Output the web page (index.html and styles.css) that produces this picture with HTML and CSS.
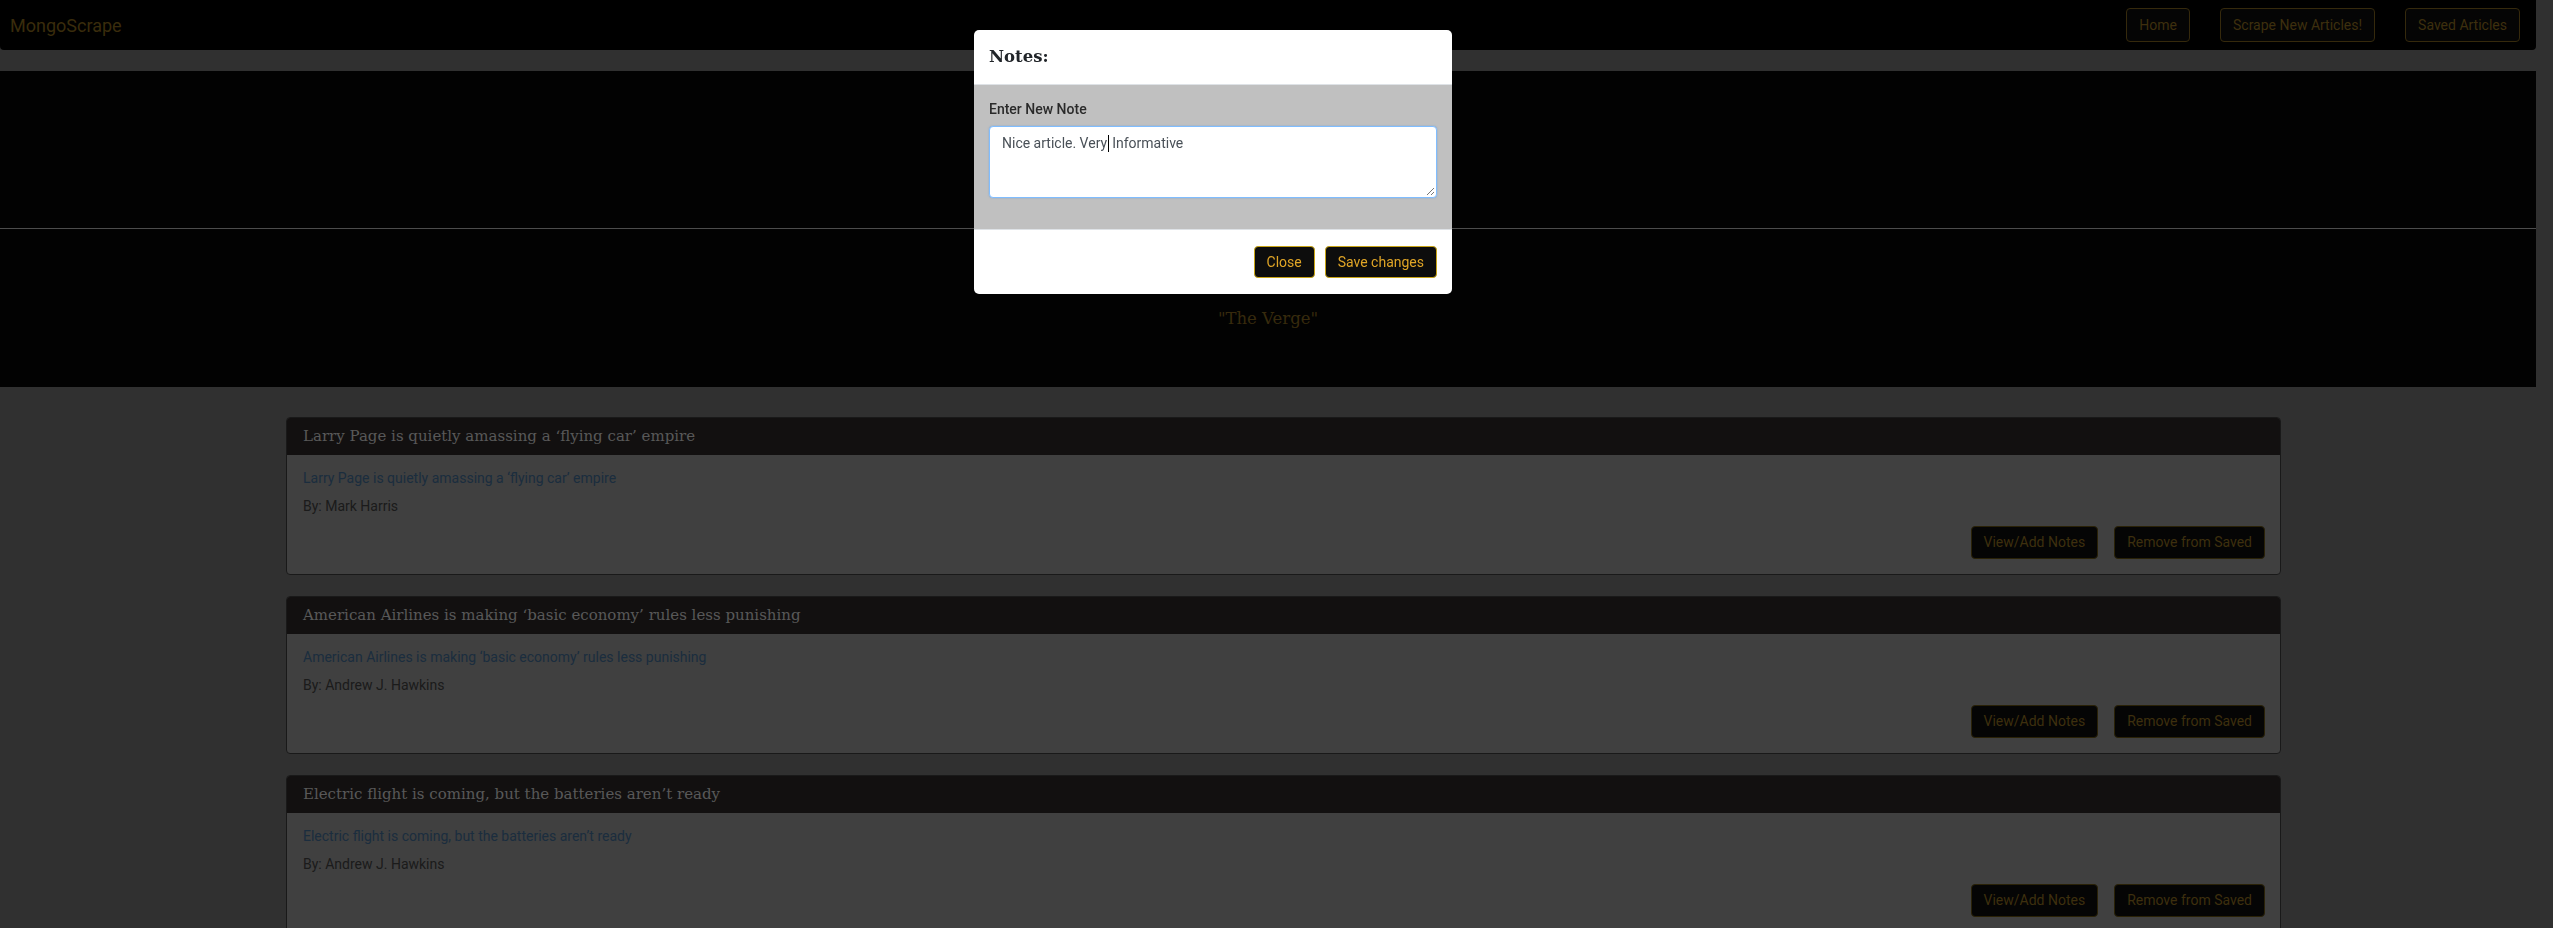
FILE: index.html
```html
<!DOCTYPE html>
<html lang="en">
<head>
<meta charset="utf-8">
<title>MongoScrape - Saved Articles</title>
<link rel="stylesheet" href="styles.css">
</head>
<body class="modal-open">
  <nav class="navbar">
    <a class="brand" href="#">MongoScrape</a>
    <div class="nav-links">
      <a class="nav-btn" href="#">Home</a>
      <a class="nav-btn" href="#">Scrape New Articles!</a>
      <a class="nav-btn" href="#">Saved Articles</a>
    </div>
  </nav>

  <header class="jumbotron">
    <div class="jumbo-top"></div>
    <hr class="jumbo-rule">
    <p class="jumbo-from">from</p>
    <p class="jumbo-source">"The Verge"</p>
  </header>

  <main class="articles">
    <article class="card">
      <h3 class="card-header">Larry Page is quietly amassing a ‘flying car’ empire</h3>
      <div class="card-body">
        <a class="card-link" href="#">Larry Page is quietly amassing a ‘flying car’ empire</a>
        <p class="card-byline">By: Mark Harris</p>
        <div class="card-actions">
          <button class="card-btn">View/Add Notes</button>
          <button class="card-btn">Remove from Saved</button>
        </div>
      </div>
    </article>
    <article class="card">
      <h3 class="card-header">American Airlines is making ‘basic economy’ rules less punishing</h3>
      <div class="card-body">
        <a class="card-link" href="#">American Airlines is making ‘basic economy’ rules less punishing</a>
        <p class="card-byline">By: Andrew J. Hawkins</p>
        <div class="card-actions">
          <button class="card-btn">View/Add Notes</button>
          <button class="card-btn">Remove from Saved</button>
        </div>
      </div>
    </article>
    <article class="card">
      <h3 class="card-header">Electric flight is coming, but the batteries aren’t ready</h3>
      <div class="card-body">
        <a class="card-link" href="#">Electric flight is coming, but the batteries aren’t ready</a>
        <p class="card-byline">By: Andrew J. Hawkins</p>
        <div class="card-actions">
          <button class="card-btn">View/Add Notes</button>
          <button class="card-btn">Remove from Saved</button>
        </div>
      </div>
    </article>
  </main>

  <div class="backdrop"></div>

  <div class="modal" role="dialog">
    <div class="modal-header">
      <h5 class="modal-title">Notes:</h5>
    </div>
    <div class="modal-body">
      <div class="form-group">
        <label class="note-label">Enter New Note</label>
        <div class="note-box" role="textbox"><span class="note-text">Nice article. Very</span><span class="caret"></span><span class="note-text">Informative</span><svg class="grip" width="10" height="10" viewBox="0 0 10 10"><path d="M9 2 L2 9 M9 6 L6 9" stroke="#777" stroke-width="1" fill="none"/></svg></div>
      </div>
    </div>
    <div class="modal-footer">
      <button class="modal-btn">Close</button>
      <button class="modal-btn">Save changes</button>
    </div>
  </div>
</body>
</html>
```
FILE: styles.css
```css
* { box-sizing: border-box; }

html, body { height: 100%; }

body {
  margin: 0;
  padding-right: 17px;
  background: #616161;
  font-family: Roboto, "Liberation Sans", sans-serif;
  overflow: hidden;
}

a { text-decoration: none; }

/* Navbar */
.navbar {
  height: 50px;
  background: #000;
  border-radius: 0 0 4px 4px;
  display: flex;
  align-items: center;
  justify-content: space-between;
  padding: 0 16px 0 10px;
  margin-bottom: 21px;
}

.brand {
  font-size: 18px;
  color: #725818;
}

.nav-links {
  display: flex;
  gap: 30px;
}

.nav-btn {
  display: block;
  font-size: 14px;
  line-height: 20px;
  padding: 6px 12px;
  border: 1px solid #6a5218;
  border-radius: 4px;
  background: #0a0a0a;
  color: #7a5f1c;
}

/* Jumbotron */
.jumbotron {
  height: 316px;
  background: #040404;
  display: flex;
  flex-direction: column;
  align-items: center;
  margin-bottom: 30px;
}

.jumbo-top {
  height: 157px;
}

.jumbo-rule {
  width: 100%;
  margin: 0;
  border: 0;
  border-top: 1px solid #999;
}

.jumbo-from {
  margin: 48px 0 0;
  font-family: "DejaVu Serif", serif;
  font-size: 16px;
  line-height: 24px;
  color: #6e551a;
}

.jumbo-source {
  margin: 3px 0 0;
  font-family: "DejaVu Serif", serif;
  font-size: 16.5px;
  line-height: 30px;
  color: #6e551a;
}

/* Articles */
.articles {
  width: 1995px;
  margin-left: 286px;
  display: flex;
  flex-direction: column;
  gap: 21px;
}

.card {
  border: 1px solid #333;
  border-radius: 4px;
  background: #808080;
  overflow: hidden;
}

.card-header {
  margin: 0;
  padding: 7px 16px;
  background: #242020;
  font-family: "DejaVu Serif", serif;
  font-size: 15px;
  font-weight: normal;
  line-height: 23px;
  color: #b0b0b0;
}

.card-body {
  padding: 13px 15px 15px 16px;
}

.card-link {
  display: block;
  font-size: 14px;
  line-height: 21px;
  color: #365a7c;
  margin-bottom: 7px;
}

.card-byline {
  margin: 0;
  font-size: 14px;
  line-height: 21px;
  color: #363636;
}

.card-actions {
  display: flex;
  justify-content: flex-end;
  gap: 16px;
  margin-top: 9px;
}

.card-btn {
  font-family: Roboto, "Liberation Sans", sans-serif;
  font-size: 14px;
  line-height: 21px;
  padding: 5px 12px;
  border: 1px solid #54440f;
  border-radius: 4px;
  background: #0a0a0a;
  color: #7a5f1c;
}

/* Modal */
.backdrop {
  position: fixed;
  inset: 0;
  background: rgba(0, 0, 0, 0.5);
}

.modal {
  position: fixed;
  top: 30px;
  left: 974px;
  width: 478px;
  background: #fff;
  border-radius: 5px;
  overflow: hidden;
}

.modal-header {
  padding: 12px 15px;
  border-bottom: 1px solid #dee2e6;
}

.modal-title {
  margin: 0;
  font-family: "DejaVu Serif", serif;
  font-size: 16.5px;
  font-weight: bold;
  line-height: 30px;
  color: #212529;
}

.modal-body {
  background: #c0c0c0;
  padding: 14px 15px 15px;
}

.form-group {
  margin-bottom: 16px;
}

.note-label {
  display: block;
  font-size: 14px;
  font-weight: 500;
  line-height: 20px;
  color: #2a2a2a;
  margin-bottom: 7px;
}

.note-box {
  position: relative;
  height: 72px;
  background: #fff;
  border: 1px solid #80bdff;
  border-radius: 4px;
  box-shadow: 0 0 2px rgba(0, 123, 255, 0.35);
  padding: 5px 12px;
  font-size: 14px;
  line-height: 22px;
  color: #495057;
}

.caret {
  display: inline-block;
  width: 1px;
  height: 17px;
  margin: 0 3px 0 1px;
  background: #000;
  vertical-align: -4px;
}

.grip {
  position: absolute;
  right: 1px;
  bottom: 1px;
}

.modal-footer {
  border-top: 1px solid #dee2e6;
  padding: 16px 15px 16px;
  display: flex;
  justify-content: flex-end;
  gap: 10px;
}

.modal-btn {
  font-family: Roboto, "Liberation Sans", sans-serif;
  font-size: 14px;
  line-height: 20px;
  padding: 5px 12px;
  border: 1px solid #c8a415;
  border-radius: 4px;
  background: #0d0d0d;
  color: #e0a526;
}
```
